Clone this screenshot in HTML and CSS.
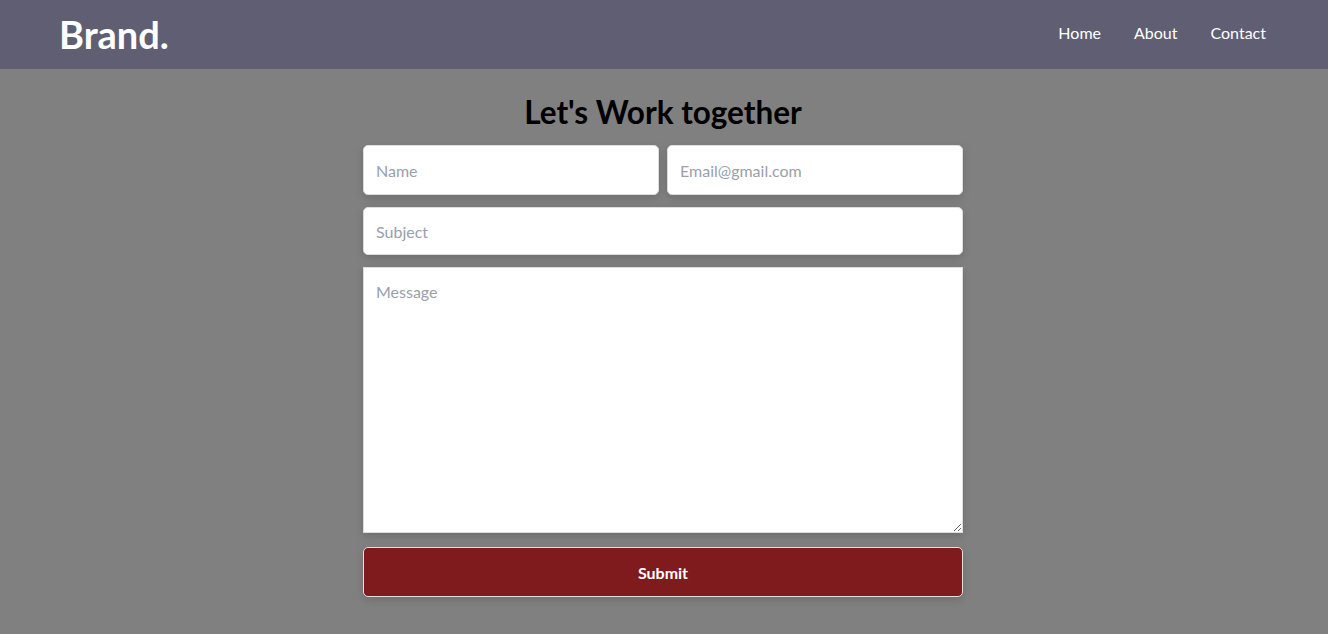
FILE: index.html
```html
<!DOCTYPE html>
<html lang="en">
<head>
<meta charset="utf-8">
<title>Brand.</title>
<link rel="stylesheet" href="styles.css">
</head>
<body>
<header class="navbar">
  <div class="brand">Brand.</div>
  <nav class="nav-links">
    <a href="#">Home</a>
    <a href="#">About</a>
    <a href="#">Contact</a>
  </nav>
</header>
<main class="contact">
  <h1 class="title">Let's Work together</h1>
  <form class="form">
    <div class="row">
      <input class="field" type="text" placeholder="Name">
      <input class="field" type="email" placeholder="Email@gmail.com">
    </div>
    <input class="field" type="text" placeholder="Subject">
    <textarea class="message" placeholder="Message"></textarea>
    <button class="submit" type="button">Submit</button>
  </form>
</main>
</body>
</html>
```
FILE: styles.css
```css
* { box-sizing: border-box; }
html, body { margin: 0; height: 100%; }
body {
  background: #808080;
  font-family: "Lato", "Open Sans", sans-serif;
}
.navbar {
  height: 69px;
  background: #5f5e72;
  display: flex;
  align-items: center;
  justify-content: space-between;
  padding: 0 62px 4px 59px;
}
.brand {
  color: #fff;
  font-weight: 700;
  font-size: 38px;
  line-height: 44px;
  margin-top: 2px;
}
.nav-links { display: flex; gap: 33px; }
.nav-links a {
  color: #fff;
  text-decoration: none;
  font-size: 16px;
}
.contact {
  display: flex;
  flex-direction: column;
  align-items: center;
  padding-right: 2px;
}
.title {
  margin: 25px 0 15px;
  font-size: 31.5px;
  font-weight: 700;
  color: #000;
  line-height: 36px;
}
.form {
  width: 600px;
  display: flex;
  flex-direction: column;
  gap: 12px;
}
.row { display: flex; gap: 8px; }
.row .field { flex: 1; height: 50px; }
.field {
  height: 48px;
  width: 100%;
  border: 1px solid #ddd;
  border-radius: 5px;
  background: #fff;
  padding: 0 12px;
  font-family: inherit;
  font-size: 16px;
  box-shadow: 0 3px 8px rgba(0,0,0,0.15);
  outline: none;
}
.field::placeholder, .message::placeholder { color: #9aa0ad; }
.message {
  height: 266px;
  width: 100%;
  border: 1px solid #ddd;
  background: #fff;
  padding: 14px 12px;
  font-family: inherit;
  font-size: 16px;
  box-shadow: 0 3px 8px rgba(0,0,0,0.15);
  outline: none;
  resize: vertical;
  margin-bottom: 2px;
}
.submit {
  height: 50px;
  width: 100%;
  background: #801b1d;
  color: #fff;
  border: 1px solid #e0e0e0;
  border-radius: 5px;
  font-family: inherit;
  font-weight: 700;
  font-size: 16px;
  box-shadow: 0 3px 8px rgba(0,0,0,0.15);
}
```
